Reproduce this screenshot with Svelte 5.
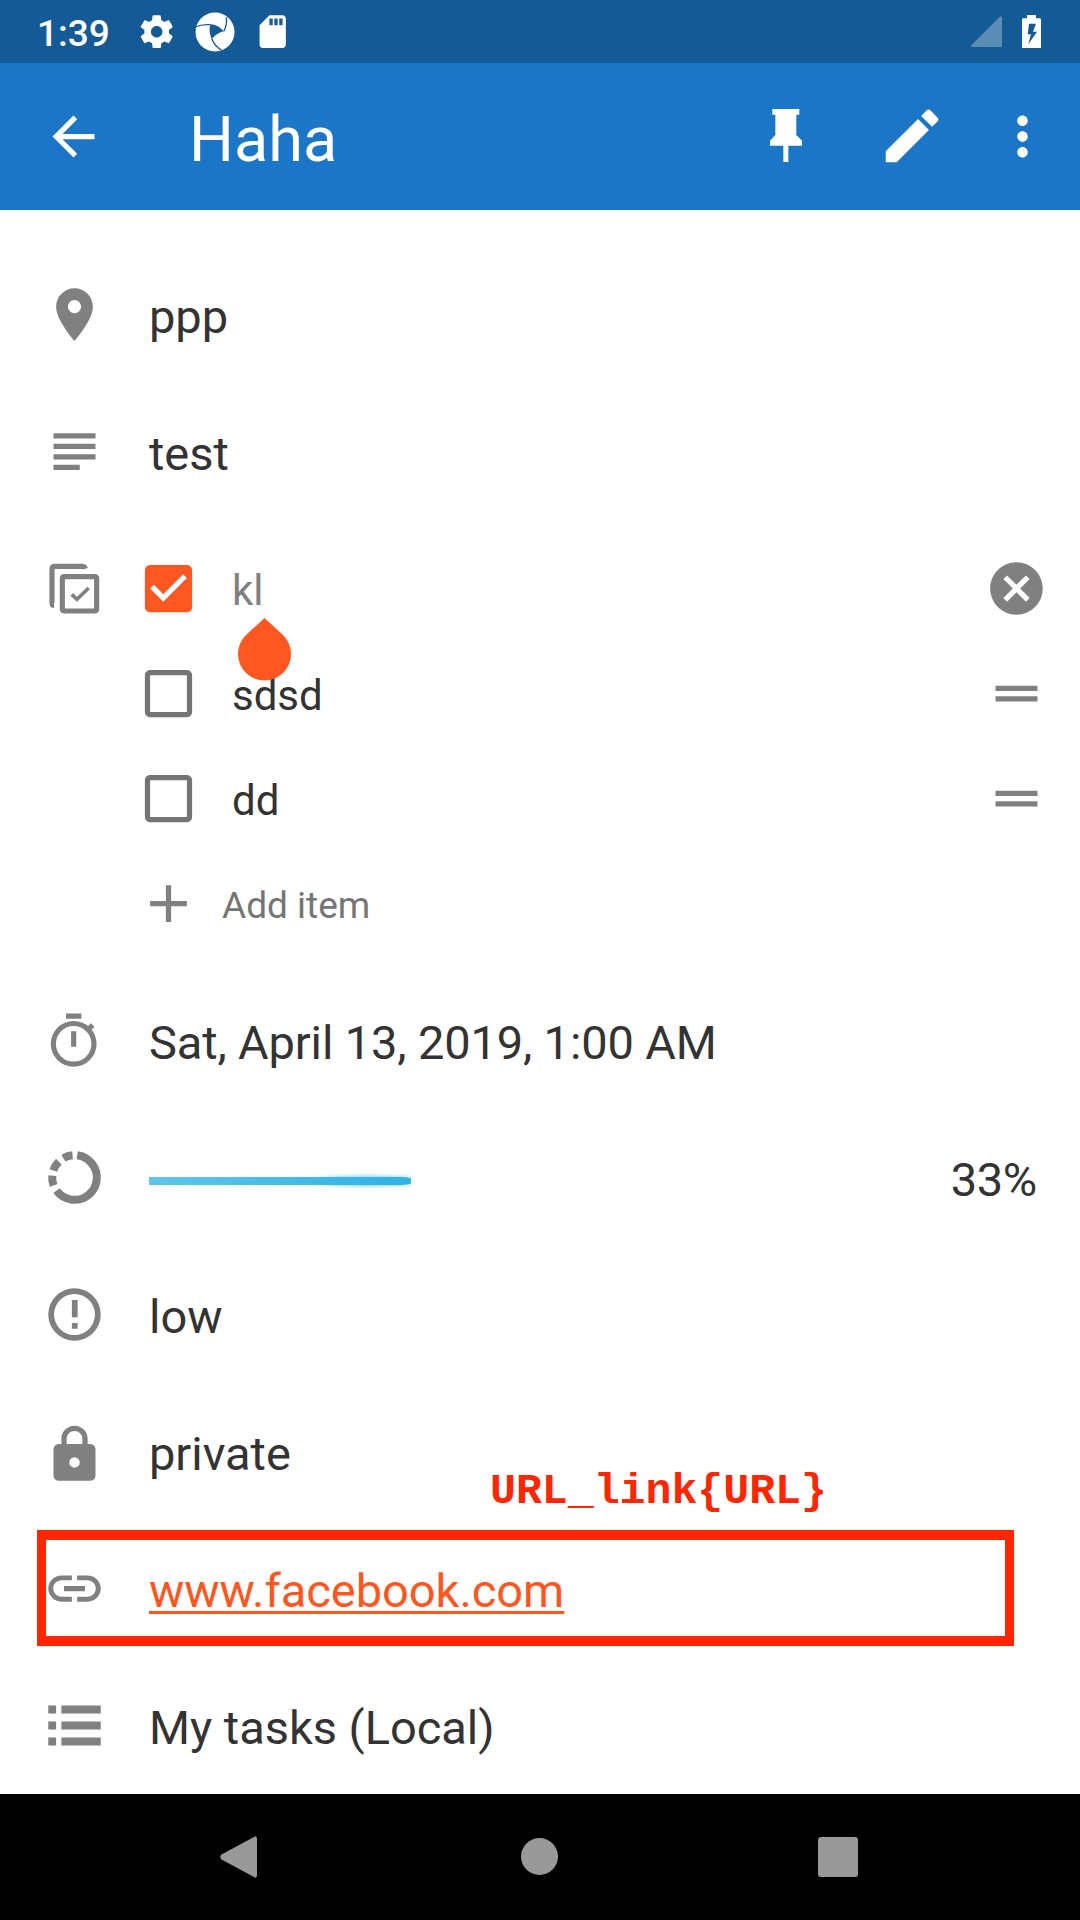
<script>
  const icons = {
    place: 'M12 2C8.13 2 5 5.13 5 9c0 5.25 7 13 7 13s7-7.75 7-13c0-3.87-3.13-7-7-7zm0 9.5a2.5 2.5 0 0 1 0-5 2.5 2.5 0 0 1 0 5z',
    subject: 'M14 17H4v2h10v-2zm6-8H4v2h16V9zM4 15h16v-2H4v2zM4 5v2h16V5H4z',
    low: 'M11 15.200h2.200v2.200h-2.200zm0-8.700h2.200v6.500h-2.200zM12 2a10 10 0 1 0 0 20 10 10 0 0 0 0-20zM12 19.800a7.800 7.800 0 1 1 0-15.600 7.800 7.800 0 0 1 0 15.600z',
    lock: 'M12 17a2 2 0 1 0 0-4 2 2 0 0 0 0 4zm6-9a2 2 0 0 1 2 2v10a2 2 0 0 1-2 2H6a2 2 0 0 1-2-2V10a2 2 0 0 1 2-2h1V6a5 5 0 0 1 10 0v2h1zm-6-5a3 3 0 0 0-3 3v2h6V6a3 3 0 0 0-3-3z',
    link: 'M3.9 12c0-1.71 1.39-3.1 3.1-3.1h4V7H7c-2.76 0-5 2.24-5 5s2.24 5 5 5h4v-1.9H7c-1.71 0-3.1-1.39-3.1-3.1zM8 13h8v-2H8v2zm9-6h-4v1.9h4c1.71 0 3.1 1.39 3.1 3.1s-1.39 3.1-3.1 3.1h-4V17h4c2.76 0 5-2.24 5-5s-2.24-5-5-5z',
    list: 'M2 4.4h3v3H2zM7 4.4h15v3H7zM2 10.5h3v3H2zM7 10.5h15v3H7zM2 16.6h3v3H2zM7 16.6h15v3H7z',
    back: 'M20 11H7.83l5.59-5.59L12 4l-8 8 8 8 1.41-1.41L7.83 13H20v-2z',
    edit: 'M3 17.25V21h3.75L17.81 9.94l-3.75-3.75L3 17.25zM20.71 7.04a.996.996 0 0 0 0-1.41l-2.34-2.34a.996.996 0 0 0-1.41 0l-1.83 1.83 3.75 3.75 1.83-1.83z',
    more: 'M12 8c1.1 0 2-.9 2-2s-.9-2-2-2-2 .9-2 2 .9 2 2 2zm0 2c-1.1 0-2 .9-2 2s.9 2 2 2 2-.9 2-2-.9-2-2-2zm0 6c-1.1 0-2 .9-2 2s.9 2 2 2 2-.9 2-2-.9-2-2-2z',
    checked: 'M19 3H5c-1.11 0-2 .9-2 2v14c0 1.1.89 2 2 2h14c1.11 0 2-.9 2-2V5c0-1.1-.89-2-2-2zm-9 14l-5-5 1.41-1.41L10 14.17l7.59-7.59L19 8l-9 9z',
    unchecked: 'M19 5v14H5V5h14m0-2H5c-1.1 0-2 .9-2 2v14c0 1.1.9 2 2 2h14c1.1 0 2-.9 2-2V5c0-1.1-.9-2-2-2z',
    add: 'M19 13h-6v6h-2v-6H5v-2h6V5h2v6h6v2z',
    cancel: 'M12 2C6.47 2 2 6.47 2 12s4.47 10 10 10 10-4.47 10-10S17.53 2 12 2zm5 13.59L15.59 17 12 13.41 8.41 17 7 15.59 10.59 12 7 8.41 8.41 7 12 10.59 15.59 7 17 8.41 13.41 12 17 15.59z',
    drag: 'M20 9H4v2h16V9zM4 15h16v-2H4v2z',
    settings: 'M19.43 12.98c.04-.32.07-.64.07-.98s-.03-.66-.07-.98l2.11-1.65c.19-.15.24-.42.12-.64l-2-3.46c-.12-.22-.39-.3-.61-.22l-2.49 1c-.52-.4-1.08-.73-1.69-.98l-.38-2.65A.488.488 0 0 0 14 2h-4c-.25 0-.46.18-.49.42l-.38 2.65c-.61.25-1.17.59-1.69.98l-2.49-1c-.23-.09-.49 0-.61.22l-2 3.46c-.13.22-.07.49.12.64l2.11 1.65c-.04.32-.07.65-.07.98s.03.66.07.98l-2.11 1.65c-.19.15-.24.42-.12.64l2 3.46c.12.22.39.3.61.22l2.49-1c.52.4 1.08.73 1.69.98l.38 2.65c.03.24.24.42.49.42h4c.25 0 .46-.18.49-.42l.38-2.65c.61-.25 1.17-.59 1.69-.98l2.49 1c.23.09.49 0 .61-.22l2-3.46c.12-.22.07-.49-.12-.64l-2.11-1.65zM12 15.5c-1.93 0-3.5-1.57-3.5-3.5s1.57-3.5 3.5-3.5 3.5 1.57 3.5 3.5-1.57 3.5-3.5 3.5z',
    sd: 'M18 2h-8L4 8v12c0 1.1.9 2 2 2h12c1.1 0 2-.9 2-2V4c0-1.1-.9-2-2-2zm-6 6h-2V4h2v4zm3 0h-2V4h2v4zm3 0h-2V4h2v4z'
  };
  const items = [
    { text: 'kl', done: true },
    { text: 'sdsd', done: false },
    { text: 'dd', done: false }
  ];
  const progress = 33;
</script>

{#snippet icon(name, cls = '')}
  <svg class="icon {cls}" viewBox="0 0 24 24"><path fill-rule="evenodd" d={icons[name]} /></svg>
{/snippet}

<div class="screen">
  <header class="status">
    <span class="time">1:39</span>
    {@render icon('settings', 'small gear')}
    <svg class="swirl" viewBox="0 0 120 120">
      <circle cx="60" cy="60" r="58.500" />
      <path class="cut" d="M46 37Q70 38 86 58Q66 63 50 81Q40 60 46 37Z" />
      <path class="line" d="M1 45Q20 36 47 38M94 16Q97 40 86 58M50 80Q60 104 80 114" />
    </svg>
    {@render icon('sd', 'small')}
    <svg class="signal" viewBox="0 0 93 93"><path d="M88 1Q93-1 93 5V93H5Q-2 93 1 88Z" /></svg>
    <svg class="battery" viewBox="0 0 57 101">
      <path fill-rule="evenodd" d="M15 0H42V10H53Q57 10 57 14V97Q57 101 53 101H4Q0 101 0 97V14Q0 10 4 10H15ZM21 26L17 58H27L19 88L45 50H33L42 26Z" />
    </svg>
  </header>

  <nav class="appbar">
    {@render icon('back')}
    <h1>Haha</h1>
    <svg class="pin" viewBox="0 0 96 160"><path d="M7 0H88V17H79V78L96 95V110H55V160H40V110H0V95L16 78V17H7Z" /></svg>
    {@render icon('edit', 'pencil')}
    {@render icon('more')}
  </nav>

  <main>
    <div class="row">{@render icon('place')}<span class="value">ppp</span></div>
    <div class="row">{@render icon('subject')}<span class="value">test</span></div>

    <section class="checklist">
      <svg class="icon" viewBox="0 0 189 189">
        <g class="stroke" stroke-width="15.5">
          <path d="M33 145Q27 145 27 137V36Q27 28 36 28H117Q125 28 127 35" />
          <rect x="58" y="59" width="103" height="103" rx="5" />
          <path d="M86 112L102 127L137 93" stroke-width="11" />
        </g>
      </svg>
      <div class="items">
        {#each items as item}
          <div class="item" class:done={item.done}>
            {@render icon(item.done ? 'checked' : 'unchecked', 'box')}
            <span class="label">{item.text}</span>
            {@render icon(item.done ? 'cancel' : 'drag')}
            {#if item.done}
              <svg class="handle" viewBox="0 0 53 63"><path d="M26.500 0L45.240 17.260A26.500 26.500 0 1 1 7.760 17.260Z" /></svg>
            {/if}
          </div>
        {/each}
        <div class="item new">{@render icon('add')}<span class="label">Add item</span></div>
      </div>
    </section>

    <div class="row">
      <svg class="icon" viewBox="0 0 189 189">
        <g class="stroke" stroke-width="15.500">
          <circle cx="92" cy="104.500" r="61" />
          <path d="M69 21.500H115M92 67V113M133 64L149 48" />
        </g>
      </svg>
      <span class="value date">Sat, April 13, 2019, 1:00 AM</span>
    </div>

    <div class="row">
      <svg class="icon" viewBox="0 0 189 189">
        <circle class="stroke" cx="94.500" cy="94.500" r="67" stroke-width="24" pathLength="360"
          stroke-dasharray="225.500 15.500 25.500 13.500 27 14.400 24.600 14" transform="rotate(-83 94.500 94.500)" />
      </svg>
      <div class="track">
        <svg class="bar" style:width="{progress * 7.94}px" viewBox="0 0 262 20" preserveAspectRatio="none">
          <defs>
            <linearGradient id="fill"><stop offset="0" stop-color="#5fc5eb" /><stop offset="1" stop-color="#2fb3e4" /></linearGradient>
            <filter id="soft" x="-40%" y="-80%" width="180%" height="260%"><feGaussianBlur stdDeviation="9 1.600" /></filter>
          </defs>
          <ellipse cx="218" cy="10" rx="58" ry="6" fill="#33b5e5" opacity=".45" filter="url(#soft)" />
          <path d="M0 6H252Q258 6 262 7.500V12.500Q258 14 252 14H0Z" fill="url(#fill)" />
        </svg>
      </div>
      <span class="value percent">{progress}%</span>
    </div>

    <div class="row">{@render icon('low')}<span class="value">low</span></div>
    <div class="row">{@render icon('lock', 'lock')}<span class="value">private</span></div>
    <div class="row">
      {@render icon('link')}<span class="value link">www.facebook.com</span>
      <div class="outline"></div>
      <span class="note">URL_link&#123;URL&#125;</span>
    </div>
    <div class="row">{@render icon('list')}<span class="value">My tasks (Local)</span></div>
  </main>

  <footer>
    <svg viewBox="0 0 42 42"><path d="M36 1Q39-1 39 3V39Q39 43 36 41L3.500 23.500Q1 21 3.500 18.500Z" /></svg>
    <svg viewBox="0 0 42 42"><circle cx="21.500" cy="20.500" r="18.500" /></svg>
    <svg viewBox="0 0 42 42"><rect x="1" y="1" width="40" height="40" rx="3" /></svg>
  </footer>
</div>

<style>
  :global(body) { margin: 0; }
  .screen {
    width: 1080px;
    height: 1920px;
    display: flex;
    flex-direction: column;
    overflow: hidden;
    background: #fff;
    color: #333;
    font-family: Roboto, sans-serif;
  }
  svg { display: block; flex: none; }
  .icon { width: 63px; height: 63px; fill: #808080; }
  .stroke { fill: none; stroke: #808080; }

  .status {
    height: 63px;
    flex: none;
    display: flex;
    align-items: center;
    box-sizing: border-box;
    padding: 0 39px 0 37px;
    background: #145a96;
    color: #fff;
    fill: #fff;
  }
  .time { width: 100px; font-size: 37px; font-weight: 500; padding-top: 3px; }
  .icon.small { width: 39.4px; height: 39.4px; fill: #fff; }
  .swirl { width: 40px; height: 40px; margin: 0 18px 0 19px; }
  .cut { fill: #145a96; }
  .line { fill: none; stroke: #145a96; stroke-width: 4; }
  .signal { width: 31px; height: 31px; margin-left: auto; opacity: 0.3; }
  .battery { width: 19px; height: 33.700px; margin-left: 20px; }

  .appbar {
    height: 147px;
    flex: none;
    display: flex;
    align-items: center;
    box-sizing: border-box;
    padding: 0 26px 0 42px;
    background: #1b76c8;
    color: #fff;
    fill: #fff;
  }
  .appbar :global(.icon) { fill: #fff; }
  h1 { margin: 0 auto 0 84px; padding-top: 6px; font-size: 63px; font-weight: 400; }
  .pin { width: 32px; height: 53.300px; margin: 0 75px 2px 0; }
  .icon.pencil { width: 70px; height: 70px; margin: 0 44px 1px 0; }

  main { flex: 1; padding-top: 36px; }
  .row {
    position: relative;
    height: 137px;
    display: flex;
    align-items: center;
    gap: 43px;
    padding: 0 43px;
  }
  .value { padding-top: 4px; font-size: 47px; letter-spacing: -0.030px; white-space: nowrap; }
  .date { letter-spacing: -0.140px; }
  .percent { letter-spacing: -0.300px; }
  .icon.lock { margin-top: 5px; }
  .link {
    color: #ff5722;
    text-decoration: underline;
    text-decoration-thickness: 2.500px;
    text-underline-offset: 4px;
    text-decoration-skip-ink: none;
  }
  .track { flex: 1; padding-top: 6px; }
  .bar { height: 20px; }

  .checklist { display: flex; padding: 16px 32px 16px 43px; }
  .checklist > .icon { margin-top: 21px; }
  .items { flex: 1; margin-left: 31px; }
  .item { position: relative; height: 105px; display: flex; align-items: center; }
  .item .label { flex: 1; margin-left: 32px; padding-top: 4px; font-size: 42px; }
  .box { fill: #757575; }
  .done { color: #808080; }
  .done .box { fill: #ff5722; }
  .new .label { margin-left: 22px; padding-top: 3px; font-size: 37px; color: #757575; }
  .handle { position: absolute; left: 101px; top: 81.500px; width: 53px; height: 63px; fill: #ff5722; z-index: 1; }

  .outline {
    position: absolute;
    left: 37px;
    top: 9.500px;
    width: 976.500px;
    height: 116.500px;
    box-sizing: border-box;
    border: solid #ff2600;
    border-width: 10px 9px;
  }
  .note {
    position: absolute;
    left: 490px;
    top: -53px;
    color: #ff2600;
    font: bold 43.200px/49px "Courier New", "Liberation Mono", monospace;
  }

  footer {
    height: 126px;
    flex: none;
    display: flex;
    align-items: center;
    justify-content: space-between;
    box-sizing: border-box;
    padding: 0 221px 0 218px;
    background: #000;
    fill: #999;
  }
  footer svg { width: 42px; height: 42px; }
</style>
